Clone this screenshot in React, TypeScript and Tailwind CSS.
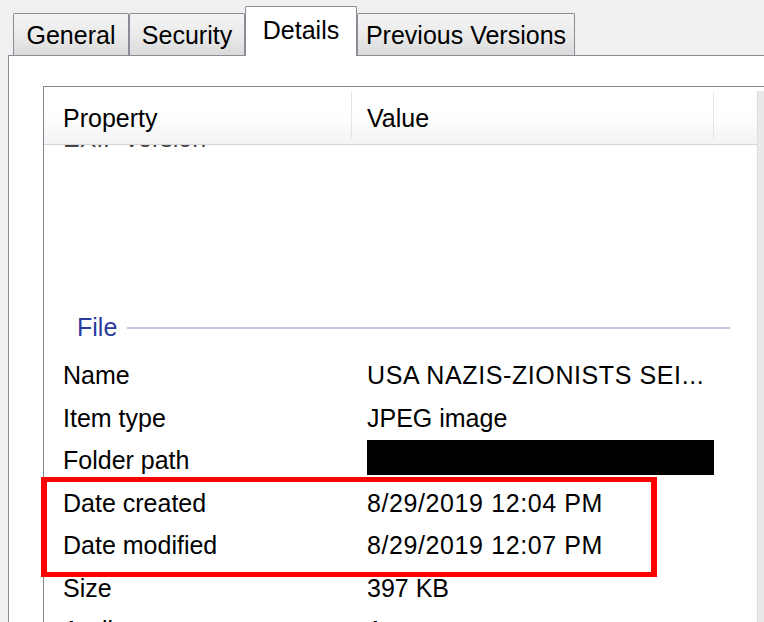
import React from "react";

type Row = {
  label: string;
  value?: string;
  redacted?: boolean;
  wide?: boolean;
};

const tabs = [
  { name: "General", width: "w-[116px]" },
  { name: "Security", width: "w-[116px]" },
  { name: "Details", width: "w-[112px]", active: true },
  { name: "Previous Versions", width: "w-[218px]" },
];

const fileRows: Row[] = [
  { label: "Name", value: "USA NAZIS-ZIONISTS SEI...", wide: true },
  { label: "Item type", value: "JPEG image" },
  { label: "Folder path", redacted: true },
  { label: "Date created", value: "8/29/2019 12:04 PM", wide: true },
  { label: "Date modified", value: "8/29/2019 12:07 PM", wide: true },
  { label: "Size", value: "397 KB" },
  { label: "Attributes", value: "A" },
];

const PropertyRow: React.FC<{ row: Row }> = ({ row }) => (
  <div className="flex h-[42.5px] shrink-0">
    <div className="w-[308px] pl-[19px] flex items-center">{row.label}</div>
    <div
      className={`flex-1 pl-[15px] flex items-center ${
        row.wide ? "tracking-[0.6px]" : ""
      }`}
    >
      {row.redacted ? (
        <div className="self-start h-[35px] w-[347px] bg-black" />
      ) : (
        row.value
      )}
    </div>
  </div>
);

const App: React.FC = () => {
  return (
    <div
      className="relative w-[764px] h-[622px] overflow-hidden bg-[#f0f0f0] text-black text-[25px] leading-normal"
      style={{ fontFamily: '"Liberation Sans", Arial, sans-serif' }}
    >
      {/* Tab strip */}
      <div className="flex items-end h-[55px] pl-[13px] pt-[7px]">
        {tabs.map((tab) =>
          tab.active ? (
            <div
              key={tab.name}
              className={`${tab.width} relative z-10 h-[50px] -mb-px flex items-center justify-center pb-[2px] bg-white border border-b-0 border-[#898c95] rounded-t-[2px]`}
            >
              {tab.name}
            </div>
          ) : (
            <div
              key={tab.name}
              className={`${tab.width} h-[42px] flex items-center justify-center pt-[3px] border border-b-0 border-[#898c95] bg-gradient-to-b from-[#f4f4f4] via-[#ebebeb] to-[#dadada] rounded-t-[2px]`}
            >
              {tab.name}
            </div>
          )
        )}
      </div>

      {/* Tab page */}
      <div className="ml-[8px] w-[800px] h-[600px] bg-white border-t border-l border-[#898c95] pl-[34px] pt-[30px]">
        <div className="flex h-full border-t border-l border-[#828790] bg-white">
          <div className="w-[713px] flex flex-col">
            {/* Column header */}
            <div className="flex h-[58px] shrink-0 border-b border-[#d5d5d5] bg-gradient-to-b from-white via-white to-[#f2f3f5]">
              <div className="w-[308px] pl-[19px] pt-[7px] flex items-center border-r border-[#e3e4e6] my-[5px]">
                Property
              </div>
              <div className="w-[362px] pl-[15px] pt-[7px] flex items-center border-r border-[#e3e4e6] my-[5px]">
                Value
              </div>
              <div className="w-[41px]" />
            </div>

            {/* Property list, scrolled down to the File group */}
            <div className="flex-1 flex flex-col overflow-hidden">
              <div className="-mt-[28px] text-[#444]">
                <PropertyRow row={{ label: "EXIF version" }} />
              </div>

              <div className="mt-[142px] h-[53px] shrink-0 flex items-center pl-[33px] pr-[27px]">
                <span className="text-[#2b3a9e]">File</span>
                <div className="flex-1 h-[2px] ml-[10px] bg-[#c3cae6]" />
              </div>

              {fileRows.map((row) => (
                <PropertyRow key={row.label} row={row} />
              ))}
            </div>
          </div>

          {/* Vertical scroll bar */}
          <div className="mt-[4px] w-[24px] bg-[#e9e9e9] border-l border-[#dcdcdc]" />
        </div>
      </div>

      {/* Highlight around the date rows */}
      <div className="absolute left-[41px] top-[477px] w-[616px] h-[100px] border-x-[6px] border-y-[5px] border-[#ff0000]" />
    </div>
  );
};

export default App;
